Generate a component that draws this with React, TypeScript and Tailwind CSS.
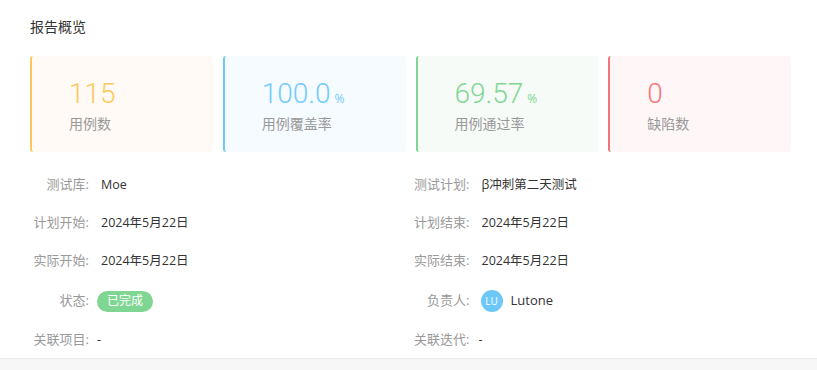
const stats = [
  { value: "115", unit: "", label: "用例数", border: "border-[#fbc85a]", bg: "bg-[#fffaf5]", text: "text-[#fcc95e]" },
  { value: "100.0", unit: "%", label: "用例覆盖率", border: "border-[#6cc9fb]", bg: "bg-[#f6fbff]", text: "text-[#72cbfc]" },
  { value: "69.57", unit: "%", label: "用例通过率", border: "border-[#7fd694]", bg: "bg-[#f6fbf8]", text: "text-[#80d795]" },
  { value: "0", unit: "", label: "缺陷数", border: "border-[#f27576]", bg: "bg-[#fff7f7]", text: "text-[#f47677]" },
];

const Label = ({ children }: { children: string }) => (
  <span className="w-[59px] shrink-0 text-right text-[13px] text-[#999999] whitespace-nowrap">
    {children}:
  </span>
);

const Row = ({ label, h = "h-[38px]", children }: { label: string; h?: string; children: React.ReactNode }) => (
  <div className={`flex items-center ${h}`}>
    <Label>{label}</Label>
    <div className="ml-[12px] flex items-center text-[12.5px] text-[#333333]">{children}</div>
  </div>
);

const App = () => {
  return (
    <div
      className="w-[817px] h-[370px] bg-white overflow-hidden flex flex-col"
      style={{ fontFamily: '"Open Sans", "Noto Sans CJK SC", sans-serif' }}
    >
      <div className="pl-[30px] pr-[26px] pt-[17px]">
        <h2 className="text-[14px] leading-[20px] text-[#333333] font-normal">报告概览</h2>

        <div className="grid grid-cols-4 gap-[10px] mt-[19px]">
          {stats.map((s) => (
            <div
              key={s.label}
              className={`h-[96px] rounded-[3px] border-l-2 ${s.border} ${s.bg} pl-[37px] pt-[24px]`}
            >
              <div className={`flex items-baseline ${s.text}`}>
                <span className="text-[28px] leading-[28px] font-light" style={{ fontFamily: "Roboto, sans-serif" }}>
                  {s.value}
                </span>
                {s.unit && <span className="ml-[4px] text-[12px]">{s.unit}</span>}
              </div>
              <div className="mt-[6px] text-[14px] leading-[20px] text-[#999999]">{s.label}</div>
            </div>
          ))}
        </div>

        <div className="grid grid-cols-2 mt-[14px]">
          <div className="flex flex-col">
            <Row label="测试库">Moe</Row>
            <Row label="计划开始">2024年5月22日</Row>
            <Row label="实际开始">2024年5月22日</Row>
            <Row label="状态" h="h-[42px]">
              <span className="h-[21px] w-[56px] -ml-[4px] rounded-full bg-[#7fd693] text-white text-[12px] flex items-center justify-center">
                已完成
              </span>
            </Row>
            <Row label="关联项目" h="h-[36px]">
              <span className="-ml-[4px]">-</span>
            </Row>
          </div>
          <div className="flex flex-col">
            <Row label="测试计划">β冲刺第二天测试</Row>
            <Row label="计划结束">2024年5月22日</Row>
            <Row label="实际结束">2024年5月22日</Row>
            <Row label="负责人" h="h-[42px]">
              <span className="h-[22px] w-[22px] -ml-[1px] rounded-full bg-[#6dc8fa] text-white text-[10px] flex items-center justify-center">
                LU
              </span>
              <span className="ml-[8px] text-[13px]">Lutone</span>
            </Row>
            <Row label="关联迭代" h="h-[36px]">
              <span className="-ml-[3px]">-</span>
            </Row>
          </div>
        </div>
      </div>
      <div className="flex-1 border-t border-[#e8e8e8] bg-[#f7f7f7]" />
    </div>
  );
};

export default App;
